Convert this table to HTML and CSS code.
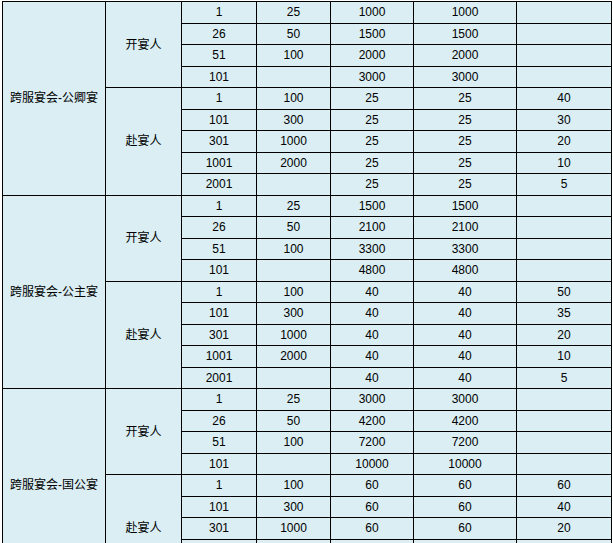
FILE: index.html
```html
<!DOCTYPE html>
<html lang="zh-CN">
<head>
<meta charset="utf-8">
<title>跨服宴会</title>
<link rel="stylesheet" href="styles.css">
</head>
<body>
<table class="feast">
  <colgroup>
    <col class="c-name"><col class="c-role"><col class="c-from"><col class="c-to"><col class="c-a"><col class="c-b"><col class="c-c">
  </colgroup>
  <tbody>
    <tr><td rowspan="9">跨服宴会-公卿宴</td><td rowspan="4">开宴人</td><td>1</td><td>25</td><td>1000</td><td>1000</td><td></td></tr>
    <tr><td>26</td><td>50</td><td>1500</td><td>1500</td><td></td></tr>
    <tr><td>51</td><td>100</td><td>2000</td><td>2000</td><td></td></tr>
    <tr><td>101</td><td></td><td>3000</td><td>3000</td><td></td></tr>
    <tr><td rowspan="5">赴宴人</td><td>1</td><td>100</td><td>25</td><td>25</td><td>40</td></tr>
    <tr><td>101</td><td>300</td><td>25</td><td>25</td><td>30</td></tr>
    <tr><td>301</td><td>1000</td><td>25</td><td>25</td><td>20</td></tr>
    <tr><td>1001</td><td>2000</td><td>25</td><td>25</td><td>10</td></tr>
    <tr><td>2001</td><td></td><td>25</td><td>25</td><td>5</td></tr>

    <tr><td rowspan="9">跨服宴会-公主宴</td><td rowspan="4">开宴人</td><td>1</td><td>25</td><td>1500</td><td>1500</td><td></td></tr>
    <tr><td>26</td><td>50</td><td>2100</td><td>2100</td><td></td></tr>
    <tr><td>51</td><td>100</td><td>3300</td><td>3300</td><td></td></tr>
    <tr><td>101</td><td></td><td>4800</td><td>4800</td><td></td></tr>
    <tr><td rowspan="5">赴宴人</td><td>1</td><td>100</td><td>40</td><td>40</td><td>50</td></tr>
    <tr><td>101</td><td>300</td><td>40</td><td>40</td><td>35</td></tr>
    <tr><td>301</td><td>1000</td><td>40</td><td>40</td><td>20</td></tr>
    <tr><td>1001</td><td>2000</td><td>40</td><td>40</td><td>10</td></tr>
    <tr><td>2001</td><td></td><td>40</td><td>40</td><td>5</td></tr>

    <tr><td rowspan="9">跨服宴会-国公宴</td><td rowspan="4">开宴人</td><td>1</td><td>25</td><td>3000</td><td>3000</td><td></td></tr>
    <tr><td>26</td><td>50</td><td>4200</td><td>4200</td><td></td></tr>
    <tr><td>51</td><td>100</td><td>7200</td><td>7200</td><td></td></tr>
    <tr><td>101</td><td></td><td>10000</td><td>10000</td><td></td></tr>
    <tr><td rowspan="5">赴宴人</td><td>1</td><td>100</td><td>60</td><td>60</td><td>60</td></tr>
    <tr><td>101</td><td>300</td><td>60</td><td>60</td><td>40</td></tr>
    <tr><td>301</td><td>1000</td><td>60</td><td>60</td><td>20</td></tr>
    <tr><td></td><td></td><td></td><td></td><td></td></tr>
    <tr><td></td><td></td><td></td><td></td><td></td></tr>
  </tbody>
</table>
</body>
</html>
```
FILE: styles.css
```css
html, body {
  background: #ffffff;
}
body {
  margin: 1px 0 0 2px;
  overflow: hidden;
}
.feast {
  border-collapse: collapse;
  table-layout: fixed;
  width: 609px;
  background: #daeef3;
  font-family: "Liberation Sans", "Noto Sans CJK SC", sans-serif;
  font-size: 12px;
  color: #000;
}
.feast td {
  border: 1px solid #000;
  padding: 0;
  height: 20.5px;
  text-align: center;
  vertical-align: middle;
  line-height: 14px;
  white-space: nowrap;
}
.c-name { width: 103px; }
.c-role { width: 76px; }
.c-from { width: 75px; }
.c-to { width: 74px; }
.c-a { width: 83px; }
.c-b { width: 103px; }
.c-c { width: 95px; }
```
